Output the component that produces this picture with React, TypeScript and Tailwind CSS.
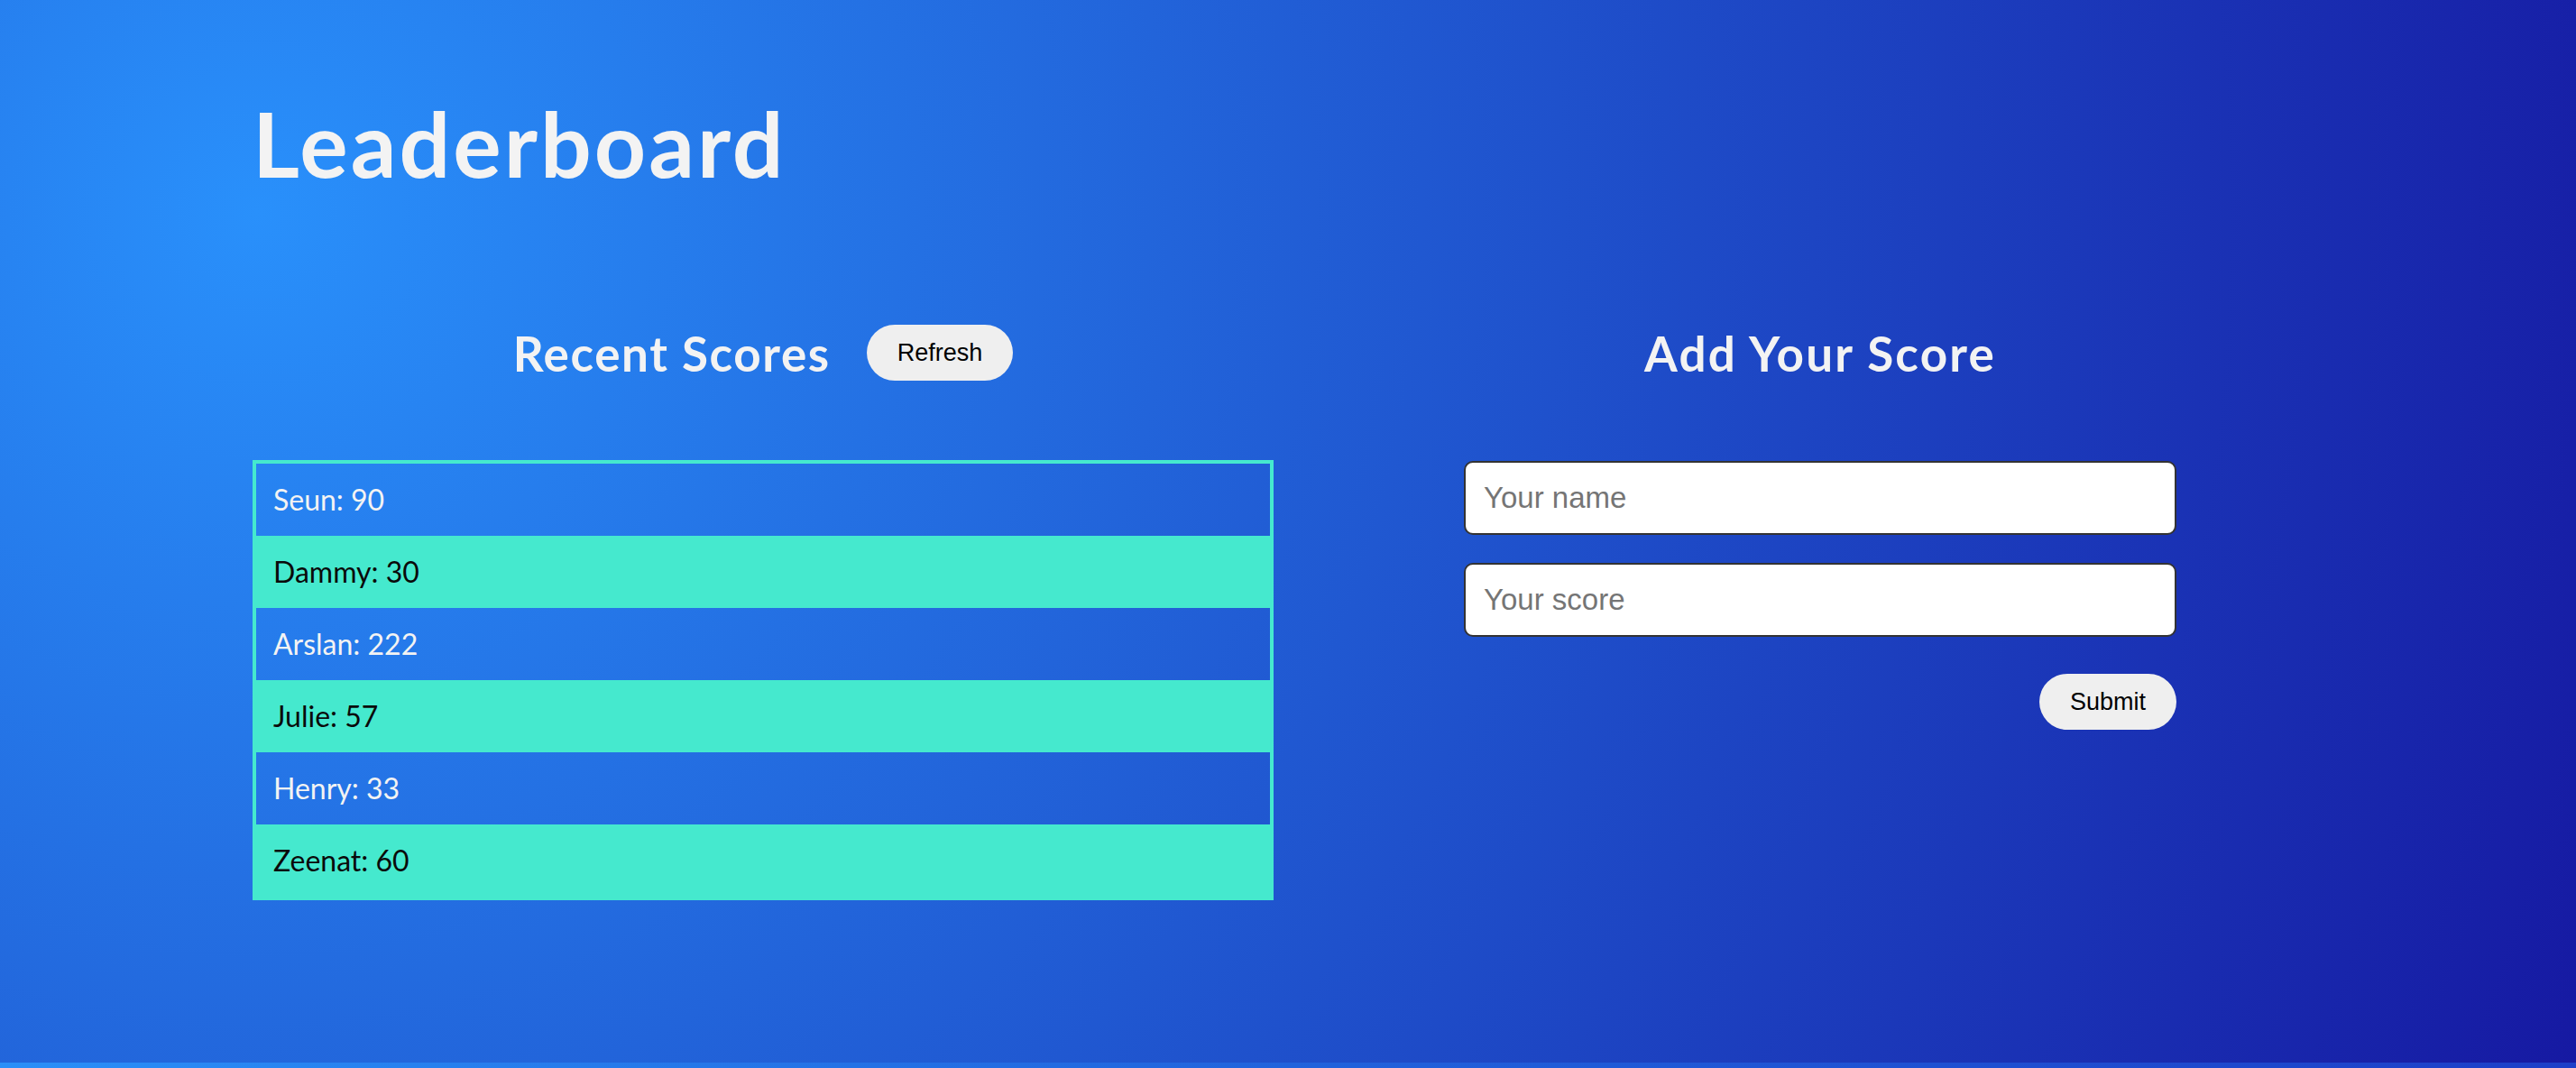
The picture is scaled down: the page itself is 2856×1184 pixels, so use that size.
import React, { useState } from 'react';

interface ScoreRow {
  name: string;
  score: number;
}

const initialScores: ScoreRow[] = [
  { name: 'Seun', score: 90 },
  { name: 'Dammy', score: 30 },
  { name: 'Arslan', score: 222 },
  { name: 'Julie', score: 57 },
  { name: 'Henry', score: 33 },
  { name: 'Zeenat', score: 60 },
];

const headingFont = "font-['Lato','Open_Sans',sans-serif]";
const controlFont = "font-['Liberation_Sans',Arial,sans-serif]";

export default function App() {
  const [scores] = useState<ScoreRow[]>(initialScores);
  const [name, setName] = useState('');
  const [score, setScore] = useState('');

  return (
    <div className="w-full">
      <div className="h-[1178px] bg-[radial-gradient(circle_at_10%_20%,#2990fb_0%,#1619a2_100%)] pl-[280px] pt-[108px]">
        <h1 className={`${headingFont} text-[100px] font-bold leading-none text-[#f3f3f3] tracking-[3px]`}>
          Leaderboard
        </h1>

        <div className="mt-[152px] flex items-start gap-[211px]">
          {/* recent scores */}
          <div className="w-[1132px]">
            <div className="flex h-[62px] items-center justify-center gap-[40px]">
              <h2 className={`${headingFont} text-[53px] font-bold leading-none text-[#f3f3f3] tracking-[1.6px]`}>
                Recent Scores
              </h2>
              <button
                type="button"
                className={`${controlFont} h-[62px] rounded-full bg-[#efefef] px-[34px] text-[27px] text-black`}
              >
                Refresh
              </button>
            </div>

            <ul className="mt-[88px] border-4 border-[#45e9ce]">
              {scores.map((row, i) => (
                <li
                  key={row.name}
                  className={`${headingFont} flex h-[80px] items-center pl-[19px] text-[32px] ${
                    i % 2 === 0 ? 'text-[#f3f3f3]' : 'bg-[#45e9ce] text-[#0a0a0a]'
                  }`}
                >
                  {row.name}: {row.score}
                </li>
              ))}
            </ul>
          </div>

          {/* add score */}
          <div className="w-[790px]">
            <div className="flex h-[62px] items-center justify-center">
              <h2 className={`${headingFont} text-[53px] font-bold leading-none text-[#f3f3f3] tracking-[2.2px]`}>
                Add Your Score
              </h2>
            </div>

            <form className="mt-[89px] flex flex-col" onSubmit={(e) => e.preventDefault()}>
              <input
                value={name}
                onChange={(e) => setName(e.target.value)}
                placeholder="Your name"
                className={`${controlFont} h-[82px] w-full rounded-[10px] border-2 border-[#333333] bg-white px-[20px] text-[33px] text-black placeholder:text-[#757575] outline-none`}
              />
              <input
                value={score}
                onChange={(e) => setScore(e.target.value)}
                placeholder="Your score"
                className={`${controlFont} mt-[31px] h-[82px] w-full rounded-[10px] border-2 border-[#333333] bg-white px-[20px] text-[33px] text-black placeholder:text-[#757575] outline-none`}
              />
              <div className="mt-[41px] flex justify-end">
                <button
                  type="submit"
                  className={`${controlFont} h-[62px] rounded-full bg-[#efefef] px-[34px] text-[27px] text-black`}
                >
                  Submit
                </button>
              </div>
            </form>
          </div>
        </div>
      </div>
      <div className="h-[6px] bg-[linear-gradient(to_right,#2a8ff8,#2163dc_50%,#1d3fc8)]" />
    </div>
  );
}
